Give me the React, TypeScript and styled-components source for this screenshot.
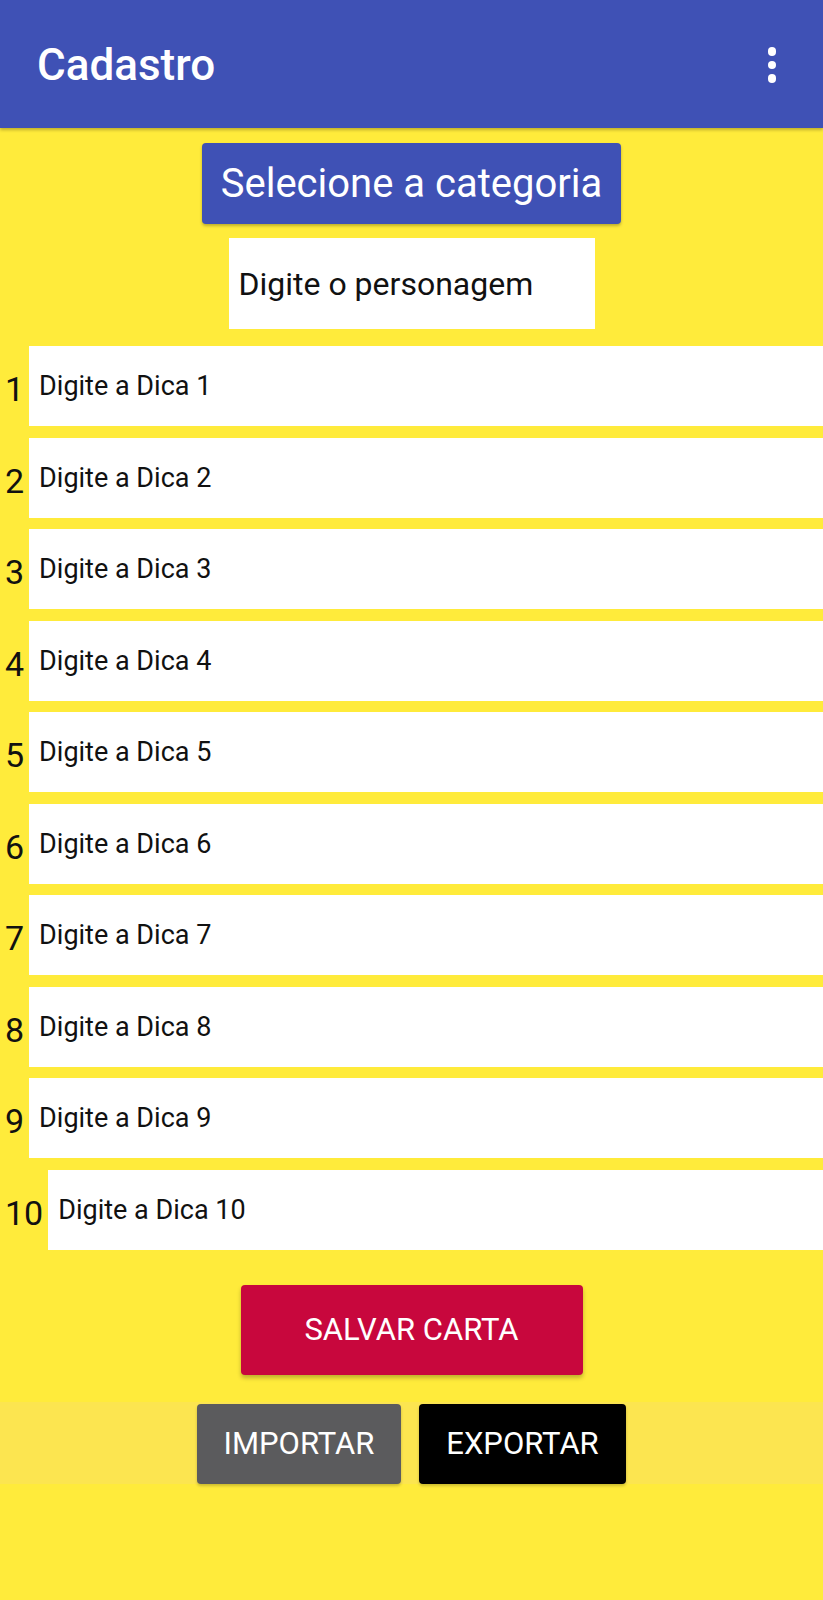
import React from "react";
import styled, { createGlobalStyle } from "styled-components";

const Global = createGlobalStyle`
  html, body { margin: 0; padding: 0; background: #FFEB3B; }
  body { font-family: Roboto, "Noto Sans", sans-serif; }
  * { box-sizing: border-box; }
`;

const Page = styled.div`
  width: 823px;
  min-height: 1600px;
  background: #FFEB3B;
  display: flex;
  flex-direction: column;
`;

const AppBar = styled.header`
  height: 128px;
  background: #3F51B5;
  display: flex;
  align-items: center;
  justify-content: space-between;
  padding: 0 39px 0 37px;
  box-shadow: 0 2px 3px rgba(0, 0, 0, 0.25);
  position: relative;
  z-index: 1;
`;

const Title = styled.h1`
  margin: 0;
  color: #fff;
  font-family: Roboto, sans-serif;
  font-weight: 500;
  font-size: 44px;
  letter-spacing: 0;
  padding-top: 2px;
`;

const MenuButton = styled.div`
  width: 24px;
  display: flex;
  flex-direction: column;
  align-items: center;
  gap: 5px;
  margin-top: 2px;
`;

const Dot = styled.span`
  width: 8.5px;
  height: 8.5px;
  border-radius: 50%;
  background: #fff;
`;

const Content = styled.main`
  display: flex;
  flex-direction: column;
  align-items: center;
  padding-top: 15px;
`;

const CategoryButton = styled.button`
  width: 419px;
  height: 81px;
  background: #3F51B5;
  color: #fff;
  border: none;
  border-radius: 4px;
  font-family: Roboto, sans-serif;
  font-size: 40px;
  font-weight: 400;
  box-shadow: 0 2px 3px rgba(0, 0, 0, 0.25);
  padding: 0;
`;

const NameInput = styled.input`
  margin-top: 14px;
  width: 366px;
  height: 91px;
  border: none;
  outline: none;
  background: #fff;
  padding: 0 0 0 10px;
  font-family: Roboto, sans-serif;
  font-size: 32px;
  color: #111;
  &::placeholder { color: #111; opacity: 1; }
`;

const Tips = styled.div`
  align-self: stretch;
  margin-top: 17px;
  display: flex;
  flex-direction: column;
  gap: 11.5px;
`;

const TipRow = styled.div`
  display: flex;
  align-items: center;
  height: 80px;
`;

const TipNumber = styled.span`
  font-family: Roboto, sans-serif;
  font-size: 34px;
  color: #111;
  padding: 6px 5px 0 5px;
  line-height: 1;
`;

const TipInput = styled.input`
  flex: 1;
  min-width: 0;
  height: 80px;
  border: none;
  outline: none;
  background: #fff;
  padding: 0 0 0 10px;
  font-family: Roboto, sans-serif;
  font-size: 27px;
  color: #111;
  &::placeholder { color: #111; opacity: 1; }
`;

const SaveButton = styled.button`
  margin-top: 35px;
  width: 342px;
  height: 90px;
  border: none;
  border-radius: 4px;
  background: #C8073D;
  color: #fff;
  font-family: Roboto, sans-serif;
  font-size: 31px;
  font-weight: 400;
  box-shadow: 0 3px 4px rgba(0, 0, 0, 0.25);
`;

const ActionBand = styled.div`
  align-self: stretch;
  margin-top: 27px;
  height: 82px;
  background: #FCE550;
  display: flex;
  justify-content: center;
  align-items: flex-end;
  gap: 18px;
`;

const ActionButton = styled.button<{ $bg: string; $w: number }>`
  width: ${(p) => p.$w}px;
  height: 80px;
  border: none;
  border-radius: 4px;
  background: ${(p) => p.$bg};
  color: #fff;
  font-family: Roboto, sans-serif;
  font-size: 31px;
  font-weight: 400;
  box-shadow: 0 2px 3px rgba(0, 0, 0, 0.2);
`;

export default function App() {
  const tips = Array.from({ length: 10 }, (_, i) => i + 1);
  return (
    <>
      <Global />
      <Page>
        <AppBar>
          <Title>Cadastro</Title>
          <MenuButton>
            <Dot />
            <Dot />
            <Dot />
          </MenuButton>
        </AppBar>
        <Content>
          <CategoryButton>Selecione a categoria</CategoryButton>
          <NameInput placeholder="Digite o personagem" />
          <Tips>
            {tips.map((n) => (
              <TipRow key={n}>
                <TipNumber>{n}</TipNumber>
                <TipInput placeholder={`Digite a Dica ${n}`} />
              </TipRow>
            ))}
          </Tips>
          <SaveButton>SALVAR CARTA</SaveButton>
          <ActionBand>
            <ActionButton $bg="#5B5B5D" $w={204}>IMPORTAR</ActionButton>
            <ActionButton $bg="#000000" $w={207}>EXPORTAR</ActionButton>
          </ActionBand>
        </Content>
      </Page>
    </>
  );
}
